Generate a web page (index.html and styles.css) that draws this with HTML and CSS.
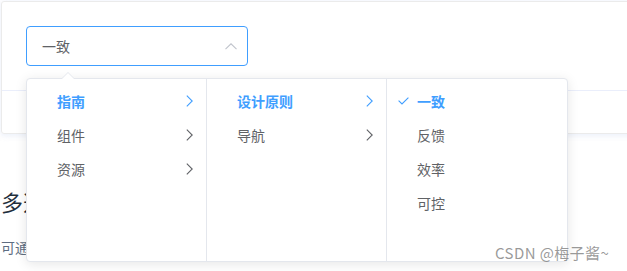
FILE: index.html
```html
<!DOCTYPE html>
<html lang="zh-CN">
<head>
<meta charset="utf-8">
<link rel="stylesheet" href="styles.css">
</head>
<body>
<div class="page">
  <div class="demo-block">
    <div class="source">
      <div class="cascader">
        <div class="input">
          <span class="value">一致</span>
          <svg class="suffix" width="12" height="7" viewBox="0 0 12 7"><path d="M0.5 6.2 L6 0.8 L11.5 6.2" fill="none" stroke="#c0c4cc" stroke-width="1.1"/></svg>
        </div>
        <div class="dropdown">
          <div class="popper-arrow"></div>
          <div class="panel">
            <div class="menu">
              <div class="node active"><span class="label">指南</span><svg class="chev" width="7" height="12" viewBox="0 0 7 12"><path d="M0.8 0.6 L6.2 6 L0.8 11.4" fill="none" stroke="currentColor" stroke-width="1.1"/></svg></div>
              <div class="node"><span class="label">组件</span><svg class="chev" width="7" height="12" viewBox="0 0 7 12"><path d="M0.8 0.6 L6.2 6 L0.8 11.4" fill="none" stroke="currentColor" stroke-width="1.1"/></svg></div>
              <div class="node"><span class="label">资源</span><svg class="chev" width="7" height="12" viewBox="0 0 7 12"><path d="M0.8 0.6 L6.2 6 L0.8 11.4" fill="none" stroke="currentColor" stroke-width="1.1"/></svg></div>
            </div>
            <div class="menu">
              <div class="node active"><span class="label">设计原则</span><svg class="chev" width="7" height="12" viewBox="0 0 7 12"><path d="M0.8 0.6 L6.2 6 L0.8 11.4" fill="none" stroke="currentColor" stroke-width="1.1"/></svg></div>
              <div class="node"><span class="label">导航</span><svg class="chev" width="7" height="12" viewBox="0 0 7 12"><path d="M0.8 0.6 L6.2 6 L0.8 11.4" fill="none" stroke="currentColor" stroke-width="1.1"/></svg></div>
            </div>
            <div class="menu last">
              <div class="node active"><svg class="check" width="11" height="8" viewBox="0 0 11 8"><path d="M0.6 3.6 L4 7 L10.4 0.6" fill="none" stroke="currentColor" stroke-width="1.1"/></svg><span class="label">一致</span></div>
              <div class="node"><span class="label">反馈</span></div>
              <div class="node"><span class="label">效率</span></div>
              <div class="node"><span class="label">可控</span></div>
            </div>
          </div>
        </div>
      </div>
    </div>
    <div class="control"></div>
  </div>
  <h3 class="title">多选</h3>
  <p class="desc">可通过 props.multiple = true 来开启多选模式</p>
  <div class="watermark">CSDN @梅子酱~</div>
</div>
</body>
</html>
```
FILE: styles.css
```css
html, body {
  margin: 0;
  padding: 0;
  background: #fff;
}
body {
  font-family: "Noto Sans CJK SC", "Noto Sans", sans-serif;
  font-size: 14px;
  color: #606266;
}
.page {
  position: relative;
  box-sizing: border-box;
  width: 627px;
  height: 271px;
  overflow: hidden;
  padding: 1px 0 0 1px;
}
.demo-block {
  width: 680px;
  border: 1px solid #ebebeb;
  border-radius: 3px;
  box-shadow: 0 0 8px 0 rgba(232, 237, 250, 0.6), 0 2px 4px 0 rgba(232, 237, 250, 0.5);
}
.source {
  padding: 24px 24px 24px 24px;
}
.cascader {
  position: relative;
  width: 222px;
}
.input {
  box-sizing: border-box;
  height: 40px;
  width: 222px;
  border: 1px solid #409eff;
  border-radius: 4px;
  display: flex;
  align-items: center;
  padding: 0 10px 0 15px;
}
.value {
  flex: 1;
  color: #606266;
  line-height: 1;
}
.control {
  height: 42px;
  border-top: 1px solid #eaeefb;
}
.dropdown {
  position: absolute;
  left: 0;
  top: 52px;
  z-index: 10;
  background: #fff;
  border: 1px solid #e4e7ed;
  border-radius: 4px;
  box-shadow: 0 2px 12px 0 rgba(0, 0, 0, 0.1);
}
.popper-arrow {
  position: absolute;
  top: -7px;
  left: 35px;
  width: 0;
  height: 0;
  border-left: 6px solid transparent;
  border-right: 6px solid transparent;
  border-bottom: 6px solid #e4e7ed;
}
.popper-arrow::after {
  content: "";
  position: absolute;
  left: -6px;
  top: 1px;
  border-left: 6px solid transparent;
  border-right: 6px solid transparent;
  border-bottom: 6px solid #fff;
}
.panel {
  display: flex;
}
.menu {
  box-sizing: border-box;
  width: 180px;
  height: 182px;
  padding: 5px 0;
  border-right: 1px solid #e4e7ed;
}
.menu.last {
  border-right: none;
}
.node {
  position: relative;
  height: 34px;
  display: flex;
  align-items: center;
  padding: 0 30px 0 20px;
  color: #606266;
}
.label {
  flex: 1;
  padding: 0 10px;
  line-height: 34px;
}
.node.active {
  color: #409eff;
  font-weight: bold;
}
.chev {
  position: absolute;
  right: 13px;
  top: 11px;
  color: #606266;
}
.node.active .chev {
  color: #409eff;
}
.check {
  position: absolute;
  left: 11px;
  top: 13px;
  color: #409eff;
}
.title {
  margin: 51px 0 0 0;
  font-size: 22px;
  font-weight: 400;
  line-height: 33px;
  color: #1f2f3d;
}
.desc {
  margin: 19px 0 0 0;
  font-size: 14px;
  line-height: 21px;
  color: #5e6d82;
  white-space: nowrap;
}
.watermark {
  position: absolute;
  left: 495px;
  top: 243px;
  font-size: 15px;
  letter-spacing: 0.4px;
  line-height: 20px;
  color: rgba(120, 120, 120, 0.75);
  z-index: 20;
  white-space: nowrap;
}
```
